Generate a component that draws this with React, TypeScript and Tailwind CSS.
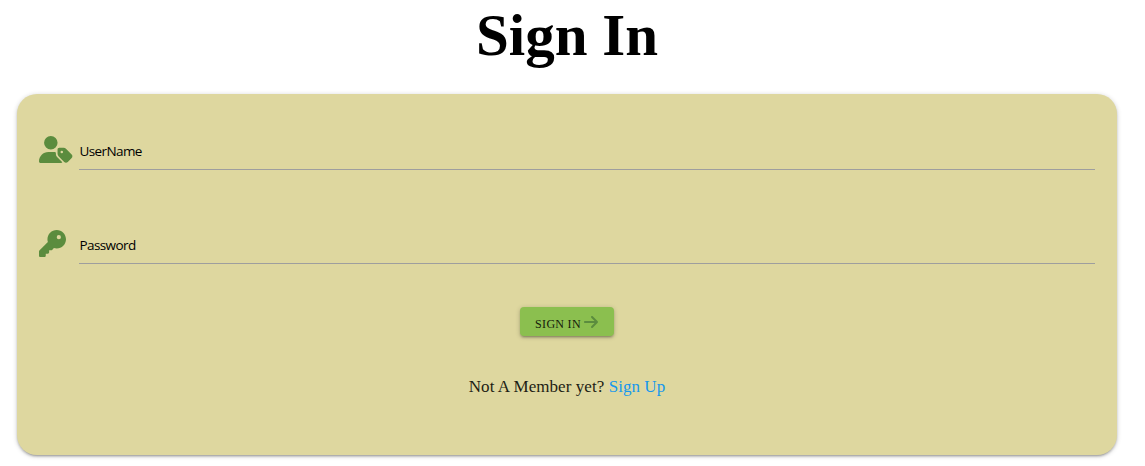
import { FaArrowRight, FaKey, FaUserTag } from "react-icons/fa6";
import type { ReactNode } from "react";

function Field({ icon, label, type }: { icon: ReactNode; label: string; type: string }) {
  return (
    <label className="flex h-[48px] items-start">
      <span className="flex w-[40px] shrink-0 pt-[13px] text-[#5b8c3e]">{icon}</span>
      <span className="relative flex h-[48px] grow items-center border-b border-[#9e9e9e]">
        <span className="pl-[0.5px] pt-[10px] font-['Open_Sans','Noto_Sans',sans-serif] text-[13.5px] leading-5 tracking-[-0.6px] text-black">
          {label}
        </span>
        <input type={type} aria-label={label} className="absolute inset-0 bg-transparent outline-none" />
      </span>
    </label>
  );
}

export default function App() {
  return (
    <main className="h-[466px] overflow-hidden bg-white pl-[17px] pr-[28px] font-['Liberation_Serif',serif]">
      <h1 className="flex h-[94px] justify-center text-[59px] font-bold leading-[70px] text-black">
        <span className="whitespace-nowrap">Sign In</span>
      </h1>
      <form
        onSubmit={(event) => event.preventDefault()}
        className="flex h-[361px] flex-col rounded-[20px] bg-[#ded79f] px-[22px] pt-[28px] shadow-[0_2px_2px_0_rgba(0,0,0,0.14),0_3px_1px_-2px_rgba(0,0,0,0.12),0_1px_5px_0_rgba(0,0,0,0.2)]"
      >
        <Field icon={<FaUserTag className="mt-px h-[27px] w-[33.75px]" />} label="UserName" type="text" />
        <div className="h-[46px]" />
        <Field icon={<FaKey className="mt-[0.5px] size-[27px]" />} label="Password" type="password" />
        <button className="mt-[43px] flex h-[29px] w-[94px] items-center justify-center gap-[2px] self-center rounded-[4px] bg-[#8bbf4f] text-[12px] text-[#16200b] shadow-[0_2px_2px_0_rgba(0,0,0,0.14),0_3px_1px_-2px_rgba(0,0,0,0.12),0_1px_5px_0_rgba(0,0,0,0.2)]">
          <span className="whitespace-nowrap pt-[5px] tracking-[0.3px]">SIGN IN</span>
          <FaArrowRight className="mt-px size-[16px] text-[#5b8c3e]" />
        </button>
        <p className="mt-[39px] whitespace-nowrap text-center text-[17px] leading-6 tracking-[0.06px] text-[#1d1d14]">
          Not A Member yet? <a href="#" className="text-[#1698ed]">Sign Up</a>
        </p>
      </form>
    </main>
  );
}
